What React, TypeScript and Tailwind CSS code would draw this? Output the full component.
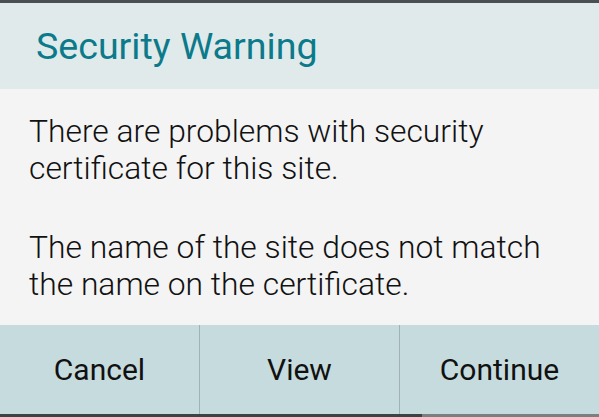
import React from 'react';

const buttons = ['Cancel', 'View', 'Continue'];

export default function App() {
  return (
    <div
      className="w-[599px] h-[417px] overflow-hidden flex flex-col bg-[#3c4346]"
      style={{ fontFamily: 'Roboto, "Noto Sans", sans-serif' }}
    >
      <div className="h-[3px] bg-[#4a4f52]" />
      <div className="h-[86px] bg-[#e1eaea] flex items-center pl-[36px]">
        <h1 className="text-[37.6px] leading-none text-[#0b7a8a] pt-[2px]">Security Warning</h1>
      </div>
      <div className="h-[236px] bg-[#f4f4f4] pl-[29px] pr-[28px] pt-[24px] text-[31.8px] leading-[37px] font-light text-[#111]">
        <p>There are problems with security certificate for this site.</p>
        <p className="mt-[42px]">The name of the site does not match the name on the certificate.</p>
      </div>
      <div className="h-[89px] bg-[#c6dbdd] flex">
        {buttons.map((b, i) => (
          <button
            key={b}
            className={`flex-1 flex items-center justify-center text-[30px] text-[#111] ${
              i > 0 ? 'border-l border-[#9fb2b4]' : ''
            }`}
          >
            {b}
          </button>
        ))}
      </div>
      <div className="h-[3px] flex">
        <div className="w-[422px] bg-[#3c4346]" />
        <div className="flex-1 bg-[#7a7f80]" />
      </div>
    </div>
  );
}
